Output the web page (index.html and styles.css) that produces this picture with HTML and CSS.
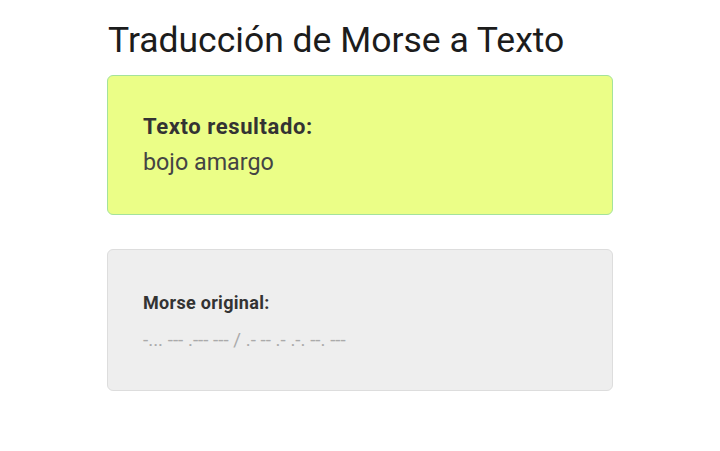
FILE: index.html
```html
<!DOCTYPE html>
<html lang="es">
<head>
<meta charset="utf-8">
<title>Traducción de Morse a Texto</title>
<link rel="stylesheet" href="styles.css">
</head>
<body>
<main class="page">
  <h1 class="title">Traducción de Morse a Texto</h1>
  <section class="card card-result">
    <h2 class="label">Texto resultado:</h2>
    <p class="result">bojo amargo</p>
  </section>
  <section class="card card-source">
    <h3 class="label-small">Morse original:</h3>
    <p class="morse">-... --- .--- --- / .- -- .- .-. --. ---</p>
  </section>
</main>
</body>
</html>
```
FILE: styles.css
```css
* { box-sizing: border-box; }
html, body { margin: 0; padding: 0; background: #fff; }
body { font-family: Roboto, "Noto Sans", sans-serif; color: #333; }
.page {
  width: 506px;
  margin: 0 auto;
  padding-top: 18px;
  display: flex;
  flex-direction: column;
}
.title {
  margin: 0 0 13px 1px;
  font-size: 35.5px;
  font-weight: 400;
  line-height: 44px;
  color: #1c1c1c;
}
.card {
  border-radius: 6px;
  border: 1px solid;
  padding: 0 35px;
}
.card-result {
  background: #ebfe87;
  border-color: #a4e39b;
  height: 140px;
  padding-top: 36px;
}
.card-source {
  background: #eeeeee;
  border-color: #dddddd;
  height: 142px;
  margin-top: 34px;
  padding-top: 41px;
}
.label {
  margin: 0;
  font-size: 22px;
  font-weight: 700;
  letter-spacing: 0.6px;
  line-height: 30px;
  color: #333;
}
.result {
  margin: 5px 0 0;
  font-size: 23.3px;
  line-height: 30px;
  color: #444;
}
.label-small {
  margin: 0;
  font-size: 18px;
  font-weight: 700;
  letter-spacing: 0.3px;
  line-height: 24px;
  color: #333;
}
.morse {
  margin: 14px 0 0;
  font-size: 18.8px;
  line-height: 22px;
  color: #aaa;
}
```
